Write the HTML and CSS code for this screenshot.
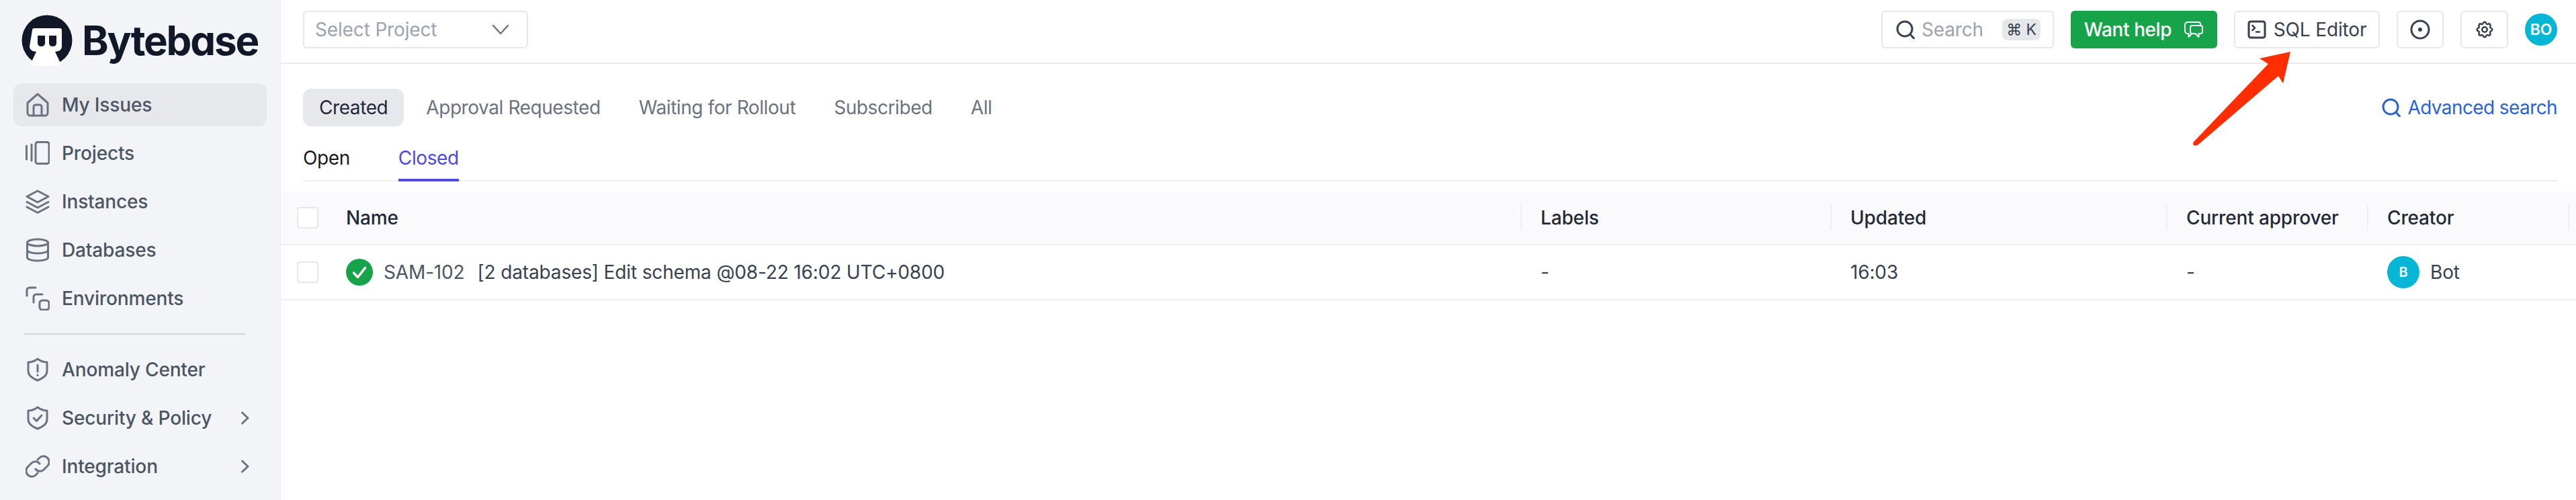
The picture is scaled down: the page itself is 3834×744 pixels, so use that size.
FILE: index.html
```html
<!DOCTYPE html>
<html lang="en">
<head>
<meta charset="utf-8">
<title>Bytebase - My Issues</title>
<link rel="stylesheet" href="styles.css">
</head>
<body>
<div class="app">
  <aside class="sidebar">
    <div class="brand">
      <svg class="brand-mark" viewBox="0 0 76 76">
        <circle cx="38" cy="38" r="37.5" fill="#111827"/>
        <path d="M16 23q0-3 3-3h38q3 0 3 3v24q0 5-5 7l-5 1 9 19q-9 2-23 2t-23-2l9-19-5-1q-5-2-5-7z" fill="#fff"/>
        <path d="M24 31h11v11q0 5-5.500 5T24 42zM41 31h11v11q0 5-5.500 5T41 42z" fill="#111827"/>
      </svg>
      <span class="brand-name">Bytebase</span>
    </div>
    <nav class="nav">
      <a class="nav-item active"><svg class="nav-icon" viewBox="0 0 36 36"><path d="M3 15 18 2l15 13v15a4 4 0 0 1-4 4H7a4 4 0 0 1-4-4z"/><path d="M12 34V21a3 3 0 0 1 3-3h6a3 3 0 0 1 3 3v13"/></svg><span>My Issues</span></a>
      <a class="nav-item"><svg class="nav-icon" viewBox="0 0 36 36"><path d="M1.500 7v20M9 5v24"/><rect x="15" y="1.500" width="20" height="32" rx="3"/></svg><span>Projects</span></a>
      <a class="nav-item"><svg class="nav-icon" viewBox="0 0 36 36"><path d="M18 2 34 10.500 18 19 2 10.500z"/><path d="M2 18.500 18 27l16-8.500M2 26l16 8.500L34 26"/></svg><span>Instances</span></a>
      <a class="nav-item"><svg class="nav-icon" viewBox="0 0 36 36"><ellipse cx="18" cy="7" rx="15.500" ry="5"/><path d="M2.500 7v22c0 3 7 5 15.500 5s15.500-2 15.500-5V7M2.500 18c0 3 7 5 15.500 5s15.500-2 15.500-5"/></svg><span>Databases</span></a>
      <a class="nav-item"><svg class="nav-icon" viewBox="0 0 36 36"><path d="M15 2H6a4 4 0 0 0-4 4v8"/><path d="M25 12h-9a4 4 0 0 0-4 4v8"/><rect x="21" y="21" width="14" height="14" rx="4"/></svg><span>Environments</span></a>
      <div class="nav-divider"></div>
      <a class="nav-item"><svg class="nav-icon" viewBox="0 0 36 36"><path d="M18 2c4 3 9 5 14 5v13c0 7-6 11-14 14-8-3-14-7-14-14V7c5 0 10-2 14-5z"/><path d="M18 11v10M18 26v.5"/></svg><span>Anomaly Center</span></a>
      <a class="nav-item"><svg class="nav-icon" viewBox="0 0 36 36"><path d="M18 2c4 3 9 5 14 5v13c0 7-6 11-14 14-8-3-14-7-14-14V7c5 0 10-2 14-5z"/><path d="m12 18 4.500 4.500L24 14"/></svg><span>Security &amp; Policy</span><svg class="nav-chevron" viewBox="0 0 12 20"><path d="m1.500 2 8.500 8-8.500 8"/></svg></a>
      <a class="nav-item"><svg class="nav-icon" viewBox="0 0 36 36"><path d="M15 22a8 8 0 0 0 12 1l6-6A8.500 8.500 0 0 0 21 5l-3 3"/><path d="M21 14a8 8 0 0 0-12-1l-6 6a8.500 8.500 0 0 0 12 12l3-3"/></svg><span>Integration</span><svg class="nav-chevron" viewBox="0 0 12 20"><path d="m1.500 2 8.500 8-8.500 8"/></svg></a>
    </nav>
  </aside>
  <div class="main">
    <header class="topbar">
      <div class="select"><span>Select Project</span><svg class="select-arrow" viewBox="0 0 26 16"><path d="m2 2 11 12L24 2"/></svg></div>
      <div class="actions">
        <div class="search">
          <svg class="icon-28" viewBox="0 0 28 28"><circle cx="13" cy="13" r="11"/><path d="m21 21 5.500 6"/></svg>
          <span class="search-label">Search</span>
          <kbd class="kbd">⌘ K</kbd>
        </div>
        <button class="btn btn-green"><span>Want help</span><svg class="icon-chat" viewBox="0 0 30 27"><path d="M25 7V5a3 3 0 0 0-3-3H6a4 4 0 0 0-4 4v9a4 4 0 0 0 4 4h1.500v5l5-5"/><path d="M10 10a3 3 0 0 1 3-3h12a3 3 0 0 1 3 3v6a3 3 0 0 1-3 3h-2.500v5l-5-5H13a3 3 0 0 1-3-3z"/></svg></button>
        <button class="btn btn-sql"><svg class="icon-28" viewBox="0 0 28 28"><rect x="2" y="2" width="24" height="24" rx="3"/><path class="thin" d="m7.500 8 3.500 3.500-3.500 3.500M13 17.500h5"/></svg><span>SQL Editor</span></button>
        <button class="btn btn-icon"><svg class="icon-30" viewBox="0 0 30 30"><circle cx="15" cy="15" r="13"/><circle class="dot" cx="15" cy="15" r="3"/></svg></button>
        <button class="btn btn-icon btn-gear"><svg class="icon-30 icon-gear" viewBox="0 0 24 24"><path d="M10.300 4.300c.4-1.800 3-1.800 3.400 0a1.700 1.700 0 0 0 2.600 1.100c1.500-.9 3.300.8 2.400 2.400a1.700 1.700 0 0 0 1 2.500c1.800.4 1.800 3 0 3.400a1.700 1.700 0 0 0-1 2.600c.9 1.500-.9 3.300-2.400 2.400a1.700 1.700 0 0 0-2.600 1c-.4 1.800-3 1.800-3.400 0a1.700 1.700 0 0 0-2.600-1c-1.500.9-3.300-.9-2.400-2.400a1.700 1.700 0 0 0-1-2.600c-1.800-.4-1.800-3 0-3.400a1.700 1.700 0 0 0 1-2.500c-.9-1.600.9-3.300 2.400-2.400 1 .6 2.300.1 2.600-1.100z"/><circle cx="12" cy="12" r="3"/></svg></button>
        <div class="avatar avatar-lg">BO</div>
      </div>
    </header>
    <section class="filters">
      <div class="tabs-row">
        <div class="tabs">
          <a class="tab tab-active">Created</a>
          <a class="tab">Approval Requested</a>
          <a class="tab">Waiting for Rollout</a>
          <a class="tab">Subscribed</a>
          <a class="tab">All</a>
        </div>
        <a class="advanced"><svg class="icon-28" viewBox="0 0 28 28"><circle cx="13" cy="13" r="11"/><path d="m21 21 5.500 6"/></svg><span>Advanced search</span></a>
      </div>
      <div class="status-tabs">
        <a class="status-tab">Open</a>
        <a class="status-tab status-active">Closed</a>
      </div>
    </section>
    <div class="table">
      <div class="row row-head">
        <div class="cell cell-check"><span class="checkbox"></span></div>
        <div class="cell">Name</div>
        <div class="cell cell-sep">Labels</div>
        <div class="cell cell-sep">Updated</div>
        <div class="cell cell-sep">Current approver</div>
        <div class="cell cell-sep cell-end">Creator</div>
      </div>
      <div class="row row-body">
        <div class="cell cell-check"><span class="checkbox"></span></div>
        <div class="cell cell-name">
          <svg class="status-icon" viewBox="0 0 40 40"><circle cx="20" cy="20" r="20" fill="#16a34a"/><path d="m11.500 21 6 6.500 11-14" fill="none" stroke="#fff" stroke-width="3.500"/></svg>
          <span class="issue-id">SAM-102</span>
          <span class="issue-title">[2 databases] Edit schema @08-22 16:02 UTC+0800</span>
        </div>
        <div class="cell">-</div>
        <div class="cell">16:03</div>
        <div class="cell">-</div>
        <div class="cell cell-creator"><span class="avatar avatar-sm">B</span><span>Bot</span></div>
      </div>
    </div>
  </div>
</div>
<svg class="annotation" viewBox="0 0 150 145"><path d="M147 3 101 13 114 21 3 137q-2 3 0 5 4 2 7-1L129 39l7 11z" fill="#ff2d00"/></svg>
</body>
</html>
```
FILE: styles.css
```css
* { box-sizing: border-box; }
html, body { margin: 0; height: 100%; }
body { font-family: Inter, "Liberation Sans", sans-serif; font-size: 28px; letter-spacing: -0.15px; color: #1f2937; background: #fff; overflow: hidden; position: relative; }
svg { fill: none; stroke: currentColor; stroke-width: 3; stroke-linecap: round; stroke-linejoin: round; flex: none; display: block; }
button { font: inherit; letter-spacing: inherit; }
kbd { font: inherit; }
.app { display: flex; height: 744px; }

.sidebar { width: 418px; flex: none; background: #f3f4f7; padding: 22px 20px 0; border-right: 1px solid #eeeff2; }
.brand { display: flex; align-items: center; gap: 14px; padding-left: 12px; height: 76px; }
.brand-mark { width: 76px; height: 76px; stroke: none; }
.brand-name { font-size: 60px; font-weight: 700; line-height: 76px; color: #111827; letter-spacing: -2.1px; font-feature-settings: "cv11" 1; }
.nav { margin-top: 26px; display: flex; flex-direction: column; gap: 8px; }
.nav-item { height: 64px; display: flex; align-items: center; gap: 18px; padding-left: 18px; border-radius: 12px; color: #4b5563; font-weight: 500; }
.nav-item.active { background: #e7e8ec; }
.nav-icon { width: 36px; height: 36px; color: #6b7280; }
.nav-chevron { width: 12px; height: 20px; margin-left: auto; margin-right: 26px; color: #6b7280; }
.nav-divider { height: 2px; background: #d1d5db; margin: 12px 32px 12px 16px; }

.main { flex: 1; min-width: 0; display: flex; flex-direction: column; }
.topbar { height: 95px; flex: none; border-bottom: 2px solid #e9eaed; display: flex; align-items: flex-start; justify-content: space-between; padding: 16px 28px 0 33px; }
.select { width: 335px; height: 56px; border: 2px solid #e5e7eb; border-radius: 6px; display: flex; align-items: center; justify-content: space-between; padding: 0 26px 0 16px; color: #9ca3af; }
.select-arrow { width: 26px; height: 16px; color: #6b7280; stroke-width: 2.500; }
.actions { display: flex; gap: 25px; align-items: flex-start; }
.search { width: 257px; height: 56px; border: 2px solid #e5e7eb; border-radius: 6px; display: flex; align-items: center; padding: 0 18px 0 20px; color: #374151; }
.search-label { color: #9ca3af; margin-left: 10px; }
.kbd { margin-left: auto; width: 57px; height: 32px; background: #e5e7eb; border-radius: 8px; text-align: center; font-size: 23px; line-height: 32px; color: #374151; white-space: nowrap; }
.icon-28 { width: 28px; height: 28px; }
.icon-30 { width: 30px; height: 30px; }
.icon-chat { width: 30px; height: 27px; stroke-width: 2; }
.icon-gear { stroke-width: 2; }
.thin { stroke-width: 2.500; }
.btn { height: 56px; width: 70px; border: 2px solid #e5e7eb; border-radius: 6px; background: #fff; color: #374151; display: flex; align-items: center; justify-content: center; padding: 0; font-size: 28px; }
.btn-green { background: #16a34a; border-color: #16a34a; color: #fff; width: 218px; gap: 18px; font-weight: 500; letter-spacing: -0.4px; }
.btn-sql { width: 217px; gap: 11px; }
.btn-gear { width: 71px; }
.dot { fill: currentColor; stroke: none; }
.avatar { border-radius: 50%; background: #06b6d4; color: #fff; display: flex; align-items: center; justify-content: center; font-weight: 600; flex: none; }
.avatar-lg { width: 48px; height: 48px; font-size: 23px; margin-top: 4px; }
.avatar-sm { width: 48px; height: 48px; font-size: 20px; }

.filters { padding: 37px 28px 0 33px; flex: none; }
.tabs-row { display: flex; align-items: center; justify-content: space-between; }
.tabs { display: flex; gap: 9px; }
.tab { height: 56px; line-height: 56px; padding: 0 24px; border-radius: 12px; color: #6b7280; white-space: nowrap; letter-spacing: -0.42px; }
.tab-active { background: #e7e8ec; color: #1f2937; }
.advanced { display: flex; align-items: center; gap: 10px; color: #2a62d8; letter-spacing: -0.6px; }
.status-tabs { margin-top: 22px; height: 60px; border-bottom: 2px solid #eceef1; display: flex; gap: 72px; letter-spacing: -0.4px; }
.status-tab { height: 60px; padding-top: 8px; line-height: 34px; color: #18181b; }
.status-active { color: #4f46e5; border-bottom: 4px solid #4f46e5; }

.table { margin-top: 15px; }
.row { display: grid; grid-template-columns: 68px 1777px 461px 500px 299px 301px 1fr; }
.row-head { height: 80px; background: #fafafc; border-bottom: 2px solid #eeeff2; color: #1f2937; font-weight: 500; }
.row-body { height: 82px; border-bottom: 2px solid #eeeff2; color: #374151; }
.cell { display: flex; align-items: center; padding-left: 30px; white-space: nowrap; position: relative; }
.cell-check { padding-left: 24px; }
.row .cell-name, .row-head .cell:nth-child(2) { padding-left: 29px; }
.checkbox { width: 32px; height: 32px; border: 2px solid #e5e7eb; border-radius: 4px; background: #fff; display: block; }
.cell-sep::before { content: ""; position: absolute; left: 0; top: 20px; height: 38px; width: 2px; background: #eeeff2; }
.cell-end::after { content: ""; position: absolute; right: 0; top: 20px; height: 38px; width: 2px; background: #eeeff2; }
.cell-name { gap: 16px; }
.status-icon { width: 40px; height: 40px; stroke: none; }
.issue-id { color: #4b5563; }
.issue-title { margin-left: 3px; }
.cell-creator { gap: 16px; }

.annotation { position: absolute; left: 3262px; top: 74px; width: 150px; height: 145px; stroke: none; }
```
